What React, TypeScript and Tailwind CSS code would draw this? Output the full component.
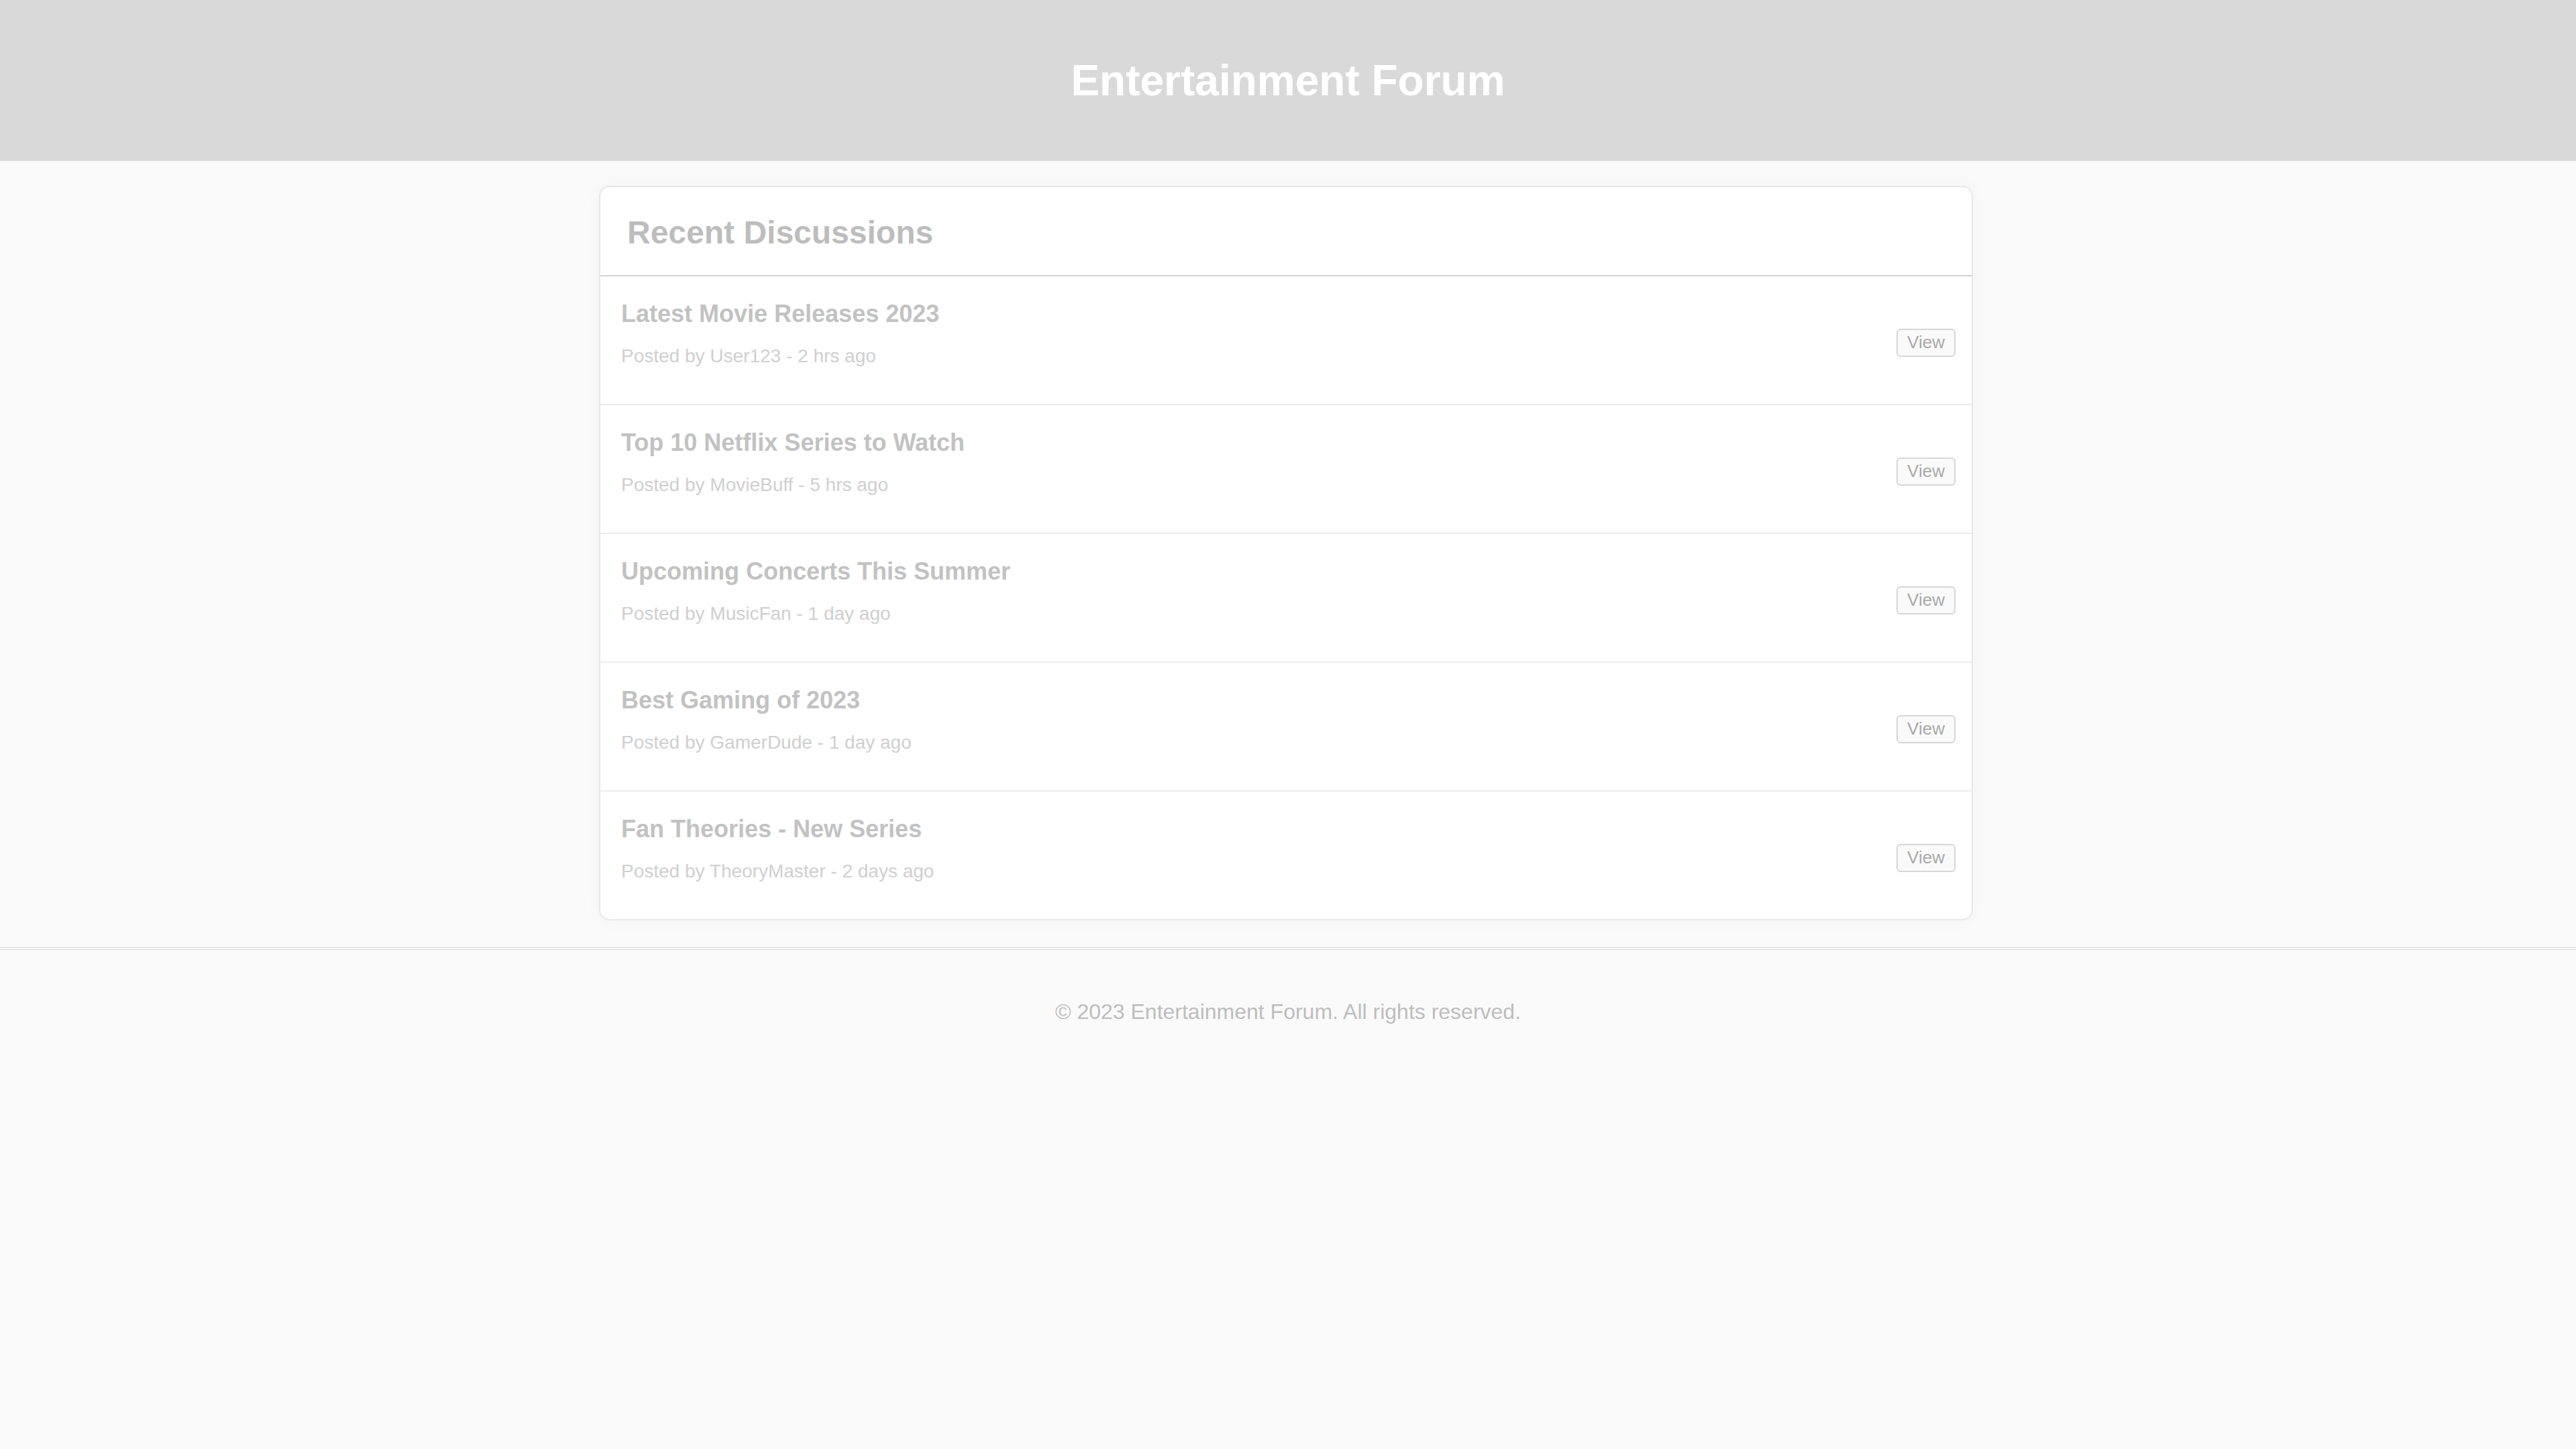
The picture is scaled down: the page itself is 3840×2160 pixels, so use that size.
import React from 'react'

const threads = [
  { title: 'Latest Movie Releases 2023', author: 'User123', time: '2 hrs ago' },
  { title: 'Top 10 Netflix Series to Watch', author: 'MovieBuff', time: '5 hrs ago' },
  { title: 'Upcoming Concerts This Summer', author: 'MusicFan', time: '1 day ago' },
  { title: 'Best Gaming of 2023', author: 'GamerDude', time: '1 day ago' },
  { title: 'Fan Theories - New Series', author: 'TheoryMaster', time: '2 days ago' },
]

export default function App() {
  return (
    <div className="min-h-screen bg-[#fafafa] font-['Liberation_Sans',Arial,sans-serif]">
      {/* Top banner */}
      <header className="h-[240px] bg-[#d9d9d9] flex items-center justify-center">
        <h1 className="text-[64px] font-bold text-white leading-[74px]">Entertainment Forum</h1>
      </header>

      <main className="pt-[37px] pb-[40px]">
        <section className="w-[2048px] mx-auto -translate-x-[3px] bg-white border-2 border-[#e8e8e8] rounded-[16px] shadow-[0_0_24px_rgba(0,0,0,0.035)] overflow-hidden">
          <div className="px-[40px] pt-[40px] pb-[36px] border-b-2 border-[#d2d2d2]">
            <h2 className="text-[48px] font-bold text-[#bdbdbd] leading-[55px]">Recent Discussions</h2>
          </div>

          {threads.map((t, i) => (
            <div
              key={t.title}
              className={`flex items-center justify-between pl-[31px] pr-[24px] pt-[35px] pb-[55px] ${
                i < threads.length - 1 ? 'border-b-2 border-[#ececec]' : ''
              }`}
            >
              <div>
                <h3 className="text-[36px] font-bold text-[#c2c2c2] leading-[41px]">{t.title}</h3>
                <p className="mt-[27px] text-[28px] text-[#cfcfcf] leading-[32px]">
                  Posted by {t.author} - {t.time}
                </p>
              </div>
              <button className="w-[88px] h-[42px] mt-[27px] flex items-center justify-center bg-[#fafafa] border-2 border-[#d6d6d6] rounded-[6px] text-[26px] text-[#a9a9a9]">
                View
              </button>
            </div>
          ))}
        </section>
      </main>

      <footer className="border-t-4 border-double border-[#d4d4d4] pt-[74px] pb-[80px] text-center">
        <p className="text-[32px] text-[#bdbdbd] leading-[37px]">© 2023 Entertainment Forum. All rights reserved.</p>
      </footer>
    </div>
  )
}
